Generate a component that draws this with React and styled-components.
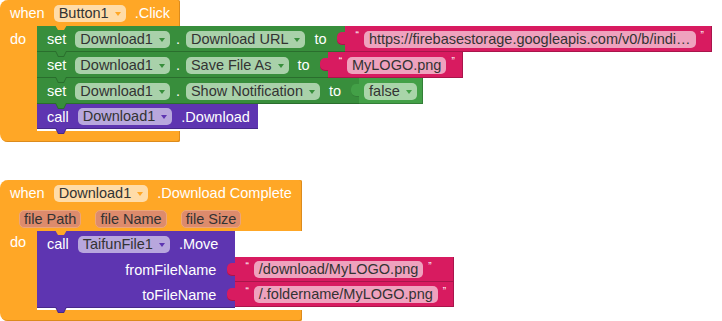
import React from "react";
import styled, { createGlobalStyle, css } from "styled-components";

const C = {
  orange: { bg: "#FFA726", dark: "#DC8B1C", field: "#FFDCA8" },
  green: { bg: "#388E3C", dark: "#2A6E2D", field: "#A9D1AA" },
  logic: { bg: "#43A047", dark: "#337F37", field: "#A9D5A9" },
  pink: { bg: "#D81B60", dark: "#A9154B", field: "#EFA2BE" },
  purple: { bg: "#5E35B1", dark: "#47288A", field: "#B8A7DD" },
  param: { fill: "#DD8B6C", border: "#EDA57A" },
};

const Global = createGlobalStyle`
  html, body { margin: 0; padding: 0; background: #fff; }
  body {
    font-family: "Liberation Sans", Arial, sans-serif;
    font-size: 14.5px;
  }
`;

const Canvas = styled.div`
  width: 722px;
  height: 321px;
  overflow: hidden;
  display: flex;
  flex-direction: column;
  align-items: flex-start;
  gap: 38px;
`;

const EventBlock = styled.div`
  display: flex;
  flex-direction: column;
  width: fit-content;
`;

const Header = styled.div`
  position: relative;
  z-index: 2;
  display: flex;
  flex-direction: column;
  background: ${C.orange.bg};
  border-radius: 8px 2px 0 0;
  box-shadow: inset -1px 0 0 ${C.orange.dark};
  &::after {
    content: "";
    position: absolute;
    left: 55px;
    bottom: -4px;
    width: 12px;
    height: 5px;
    background: ${C.orange.bg};
    clip-path: polygon(0 0, 100% 0, 75% 100%, 25% 100%);
  }
`;

const HeaderRow = styled.div`
  display: flex;
  align-items: center;
  gap: 9px;
  height: 26px;
  padding: 0 10px;
  color: #fff;
  white-space: nowrap;
`;

const ParamRow = styled.div`
  display: flex;
  align-items: center;
  gap: 14px;
  height: 25px;
  padding-left: 19px;
`;

const Body = styled.div`
  display: flex;
  width: 0;
  min-width: 100%;
`;

const DoArm = styled.div`
  flex: none;
  width: 37px;
  box-sizing: border-box;
  padding-left: 10px;
  line-height: ${(p) => p.$lh || 26}px;
  color: #fff;
  background: ${C.orange.bg};
`;

const Stack = styled.div`
  display: flex;
  flex-direction: column;
  align-items: flex-start;
  margin-bottom: 2px;
`;

const BottomArm = styled.div`
  height: 11px;
  background: ${C.orange.bg};
  border-radius: 0 0 2px 8px;
  box-shadow: inset -1px -1px 0 ${C.orange.dark};
`;

const tabs = css`
  position: relative;
  &::before,
  &::after {
    content: "";
    position: absolute;
    left: 18px;
    z-index: 1;
    clip-path: polygon(0 0, 100% 0, 75% 100%, 25% 100%);
  }
  &::before {
    bottom: -5px;
    width: 12px;
    height: 6px;
    background: ${(p) => p.$c.dark};
  }
  &::after {
    bottom: -4px;
    left: 19px;
    width: 10px;
    height: 5px;
    background: ${(p) => p.$c.bg};
  }
`;

const Statement = styled.div`
  ${tabs}
  display: flex;
  align-items: stretch;
`;

const CallGrid = styled.div`
  ${tabs}
  display: grid;
  grid-template-columns: max-content max-content;
`;

const Part = styled.div`
  display: flex;
  align-items: center;
  justify-content: ${(p) => (p.$right ? "flex-end" : "flex-start")};
  gap: 9px;
  height: ${(p) => p.$h || 26}px;
  box-sizing: border-box;
  padding: 0 ${(p) => p.$pr ?? 18}px 0 10px;
  background: ${(p) => p.$c.bg};
  color: #fff;
  white-space: nowrap;
  box-shadow: ${(p) => (p.$edge ? `inset 0 -1px 0 ${p.$c.dark}` : "none")};
  ${(p) => p.$row && css`grid-row: ${p.$row}; grid-column: 1;`}
`;

const Dot = styled.span`
  margin: 0 -3px;
`;

const Field = styled.span`
  flex: none;
  display: inline-flex;
  align-items: center;
  gap: 6px;
  height: 17px;
  line-height: 17px;
  padding: 0 5px;
  border-radius: 5px;
  background: ${(p) => p.$bg};
  color: #333;
  white-space: nowrap;
`;

const ParamField = styled.span`
  flex: none;
  display: inline-flex;
  align-items: center;
  height: 18px;
  box-sizing: border-box;
  padding: 0 4px;
  border: 1px solid ${C.param.border};
  border-radius: 5px;
  background: ${C.param.fill};
  color: #333;
  white-space: nowrap;
`;

const Arrow = styled.span`
  width: 0;
  height: 0;
  margin-top: 1px;
  border-left: 3.5px solid transparent;
  border-right: 3.5px solid transparent;
  border-top: 4px solid ${(p) => p.$c};
`;

const Value = styled.div`
  position: relative;
  display: flex;
  align-items: center;
  gap: 5px;
  height: ${(p) => p.$h || 26}px;
  box-sizing: border-box;
  padding: 0 ${(p) => p.$pr ?? 8}px 0 ${(p) => p.$pl ?? 11}px;
  background: ${(p) => p.$c.bg};
  color: #fff;
  box-shadow: inset 0 -1px 0 ${(p) => p.$c.dark}, inset -1px 0 0 ${(p) => p.$c.dark};
  ${(p) => p.$row && css`grid-row: ${p.$row}; grid-column: 2;`}
  &::before {
    content: "";
    position: absolute;
    left: -8px;
    top: 6px;
    width: 8px;
    height: 13px;
    border-radius: 5px 0 0 5px;
    background: ${(p) => p.$c.bg};
    box-shadow: inset 0 -1px 0 ${(p) => p.$c.dark};
  }
`;

const Quote = styled.span`
  align-self: flex-start;
  margin-top: 5px;
  font-size: 10px;
  line-height: 10px;
  color: #fff;
`;

const Drop = ({ c, children }) => (
  <Field $bg={c.field}>
    {children}
    <Arrow $c={c.bg} />
  </Field>
);

const Text = ({ children, ...rest }) => (
  <Value $c={C.pink} {...rest}>
    <Quote>“</Quote>
    <Field $bg={C.pink.field}>{children}</Field>
    <Quote>”</Quote>
  </Value>
);

const SetRow = ({ prop, children }) => (
  <Statement $c={C.green}>
    <Part $c={C.green} $edge>
      <span>set</span>
      <Drop c={C.green}>Download1</Drop>
      <Dot>.</Dot>
      <Drop c={C.green}>{prop}</Drop>
      <span>to</span>
    </Part>
    {children}
  </Statement>
);

export default function App() {
  return (
    <>
      <Global />
      <Canvas>
        <EventBlock>
          <Header>
            <HeaderRow>
              <span>when</span>
              <Drop c={C.orange}>Button1</Drop>
              <span>.Click</span>
            </HeaderRow>
          </Header>
          <Body>
            <DoArm>do</DoArm>
            <Stack>
              <SetRow prop="Download URL">
                <Text>https://firebasestorage.googleapis.com/v0/b/indi…</Text>
              </SetRow>
              <SetRow prop="Save File As">
                <Text>MyLOGO.png</Text>
              </SetRow>
              <SetRow prop="Show Notification">
                <Value $c={C.logic} $pl={5} $pr={6}>
                  <Drop c={C.logic}>false</Drop>
                </Value>
              </SetRow>
              <Statement $c={C.purple}>
                <Part $c={C.purple} $h={25} $pr={8} $edge>
                  <span>call</span>
                  <Drop c={C.purple}>Download1</Drop>
                  <span>.Download</span>
                </Part>
              </Statement>
            </Stack>
          </Body>
          <BottomArm />
        </EventBlock>

        <EventBlock>
          <Header>
            <HeaderRow>
              <span>when</span>
              <Drop c={C.orange}>Download1</Drop>
              <span>.Download Complete</span>
            </HeaderRow>
            <ParamRow>
              <ParamField>file Path</ParamField>
              <ParamField>file Name</ParamField>
              <ParamField>file Size</ParamField>
            </ParamRow>
          </Header>
          <Body>
            <DoArm $lh={22}>do</DoArm>
            <Stack>
              <CallGrid $c={C.purple}>
                <Part $c={C.purple} $row={1} $pr={17}>
                  <span>call</span>
                  <Drop c={C.purple}>TaifunFile1</Drop>
                  <span>.Move</span>
                </Part>
                <Part $c={C.purple} $row={2} $h={25} $pr={19} $right>
                  <span>fromFileName</span>
                </Part>
                <Text $row={2} $h={25} $pl={10}>/download/MyLOGO.png</Text>
                <Part $c={C.purple} $row={3} $pr={19} $right $edge>
                  <span>toFileName</span>
                </Part>
                <Text $row={3} $h={25} $pl={10}>/.foldername/MyLOGO.png</Text>
              </CallGrid>
            </Stack>
          </Body>
          <BottomArm />
        </EventBlock>
      </Canvas>
    </>
  );
}
